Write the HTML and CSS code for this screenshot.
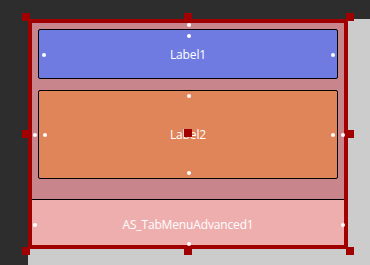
FILE: index.html
```html
<!DOCTYPE html>
<html lang="en">

<head>
    <meta charset="UTF-8">
    <title>Designer</title>
    <link rel="stylesheet" href="styles.css">
</head>

<body>
<div class="canvas">
    <div class="form">
        <div class="form-body">
            <div class="label label1">Label1</div>
            <div class="label label2">Label2</div>
        </div>
        <div class="tab-menu">AS_TabMenuAdvanced1</div>

        <!-- selection handles -->
        <span class="handle h-tl"></span>
        <span class="handle h-tc"></span>
        <span class="handle h-tr"></span>
        <span class="handle h-ml"></span>
        <span class="handle h-mr"></span>
        <span class="handle h-bl"></span>
        <span class="handle h-bc"></span>
        <span class="handle h-br"></span>
        <span class="handle h-center"></span>

        <!-- anchor dots -->
        <span class="dot" style="left:155px;top:0"></span>
        <span class="dot" style="left:155px;top:11px"></span>
        <span class="dot" style="left:10px;top:30px"></span>
        <span class="dot" style="left:299px;top:30px"></span>
        <span class="dot" style="left:155px;top:71px"></span>
        <span class="dot" style="left:11px;top:110px"></span>
        <span class="dot" style="left:299px;top:110px"></span>
        <span class="dot" style="left:155px;top:148px"></span>
        <span class="dot" style="left:1px;top:110px"></span>
        <span class="dot" style="left:309px;top:110px"></span>
        <span class="dot" style="left:1px;top:200px"></span>
        <span class="dot" style="left:309px;top:200px"></span>
        <span class="dot" style="left:155px;top:219px"></span>
    </div>
</div>
</body>

</html>
```

FILE: styles.css
```css
html,
body {
    margin: 0;
    height: 100%;
}

body {
    background-color: #2d2d2d;
    padding: 19px 0 0 28px;
    box-sizing: border-box;
    font-family: "Open Sans", "Noto Sans", sans-serif;
    font-size: 12px;
    letter-spacing: -0.15px;
    overflow: hidden;
}

.canvas {
    background-color: #cccccc;
    height: 100%;
}

.form {
    position: relative;
    box-sizing: border-box;
    width: 320px;
    height: 230px;
    border: 4px solid #a00000;
    background-color: #c8868c;
    display: flex;
    flex-direction: column;
}

.form-body {
    flex: 1;
    display: flex;
    flex-direction: column;
    gap: 11px;
    padding: 6px 6px 0;
}

.label {
    box-sizing: border-box;
    border: 1px solid #000;
    border-radius: 2px;
    color: #fff;
    display: flex;
    align-items: center;
    justify-content: center;
}

.label1 {
    height: 50px;
    background-color: #6f7be0;
}

.label2 {
    height: 89px;
    background-color: #e0845a;
}

.tab-menu {
    box-sizing: border-box;
    height: 46px;
    border-top: 1px solid #000;
    background-color: #eeaeae;
    color: #fff;
    display: flex;
    align-items: center;
    justify-content: center;
    padding-top: 3px;
}

.handle {
    position: absolute;
    width: 8px;
    height: 8px;
    background-color: #a00000;
}

.h-tl { left: -10px; top: -10px; }
.h-tc { left: 152px; top: -10px; }
.h-tr { left: 314px; top: -10px; }
.h-ml { left: -10px; top: 107px; }
.h-mr { left: 314px; top: 107px; }
.h-bl { left: -10px; top: 224px; }
.h-bc { left: 152px; top: 224px; }
.h-br { left: 314px; top: 224px; }
.h-center { left: 152px; top: 106px; }

.dot {
    position: absolute;
    width: 4px;
    height: 4px;
    border-radius: 2px;
    background-color: #fff;
}
```
